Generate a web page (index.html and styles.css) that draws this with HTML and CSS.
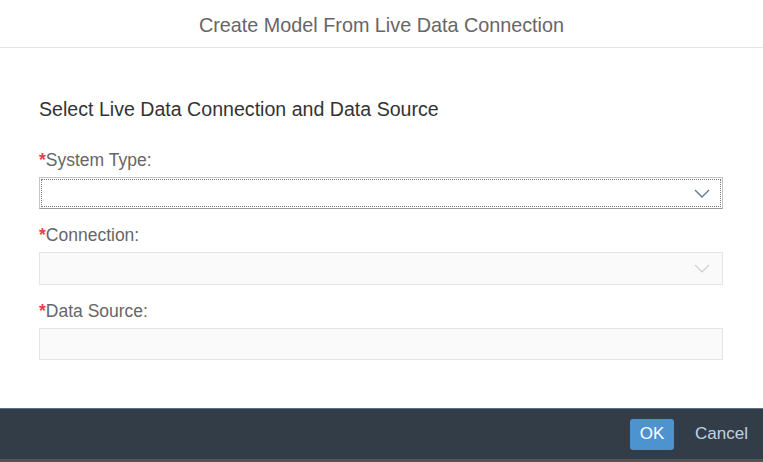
FILE: index.html
```html
<!DOCTYPE html>
<html>
<head>
<meta charset="utf-8">
<link rel="stylesheet" href="styles.css">
</head>
<body>
<div class="dialog">
  <header class="dlg-header">
    <h1 class="dlg-title">Create Model From Live Data Connection</h1>
  </header>
  <main class="dlg-content">
    <h2 class="section-title">Select Live Data Connection and Data Source</h2>
    <div class="field">
      <label class="field-label"><span class="req">*</span>System Type:</label>
      <div class="select focused">
        <svg class="chev" width="16" height="9" viewBox="0 0 16 9"><path d="M1 1 L8 8 L15 1" fill="none" stroke="currentColor" stroke-width="1.4"/></svg>
      </div>
    </div>
    <div class="field">
      <label class="field-label"><span class="req">*</span>Connection:</label>
      <div class="select disabled">
        <svg class="chev" width="16" height="9" viewBox="0 0 16 9"><path d="M1 1 L8 8 L15 1" fill="none" stroke="currentColor" stroke-width="1.2"/></svg>
      </div>
    </div>
    <div class="field">
      <label class="field-label"><span class="req">*</span>Data Source:</label>
      <div class="input disabled"></div>
    </div>
  </main>
  <footer class="dlg-footer">
    <button class="btn btn-ok">OK</button>
    <button class="btn btn-cancel">Cancel</button>
  </footer>
  <div class="bottom-strip"></div>
</div>
</body>
</html>
```
FILE: styles.css
```css
* { box-sizing: border-box; }
html, body { margin: 0; padding: 0; background: #fff; }
body { font-family: "Liberation Sans", Arial, sans-serif; }
.dialog {
  width: 763px;
  height: 462px;
  display: flex;
  flex-direction: column;
  background: #fff;
}
.dlg-header {
  height: 48px;
  border-bottom: 1px solid #e5e5e5;
  display: flex;
  align-items: center;
  justify-content: center;
}
.dlg-title {
  margin: 0;
  font-weight: normal;
  font-size: 19.8px;
  color: #666;
  padding-top: 4px;
}
.dlg-content {
  flex: 1;
  padding: 50px 40px 0 39px;
}
.section-title {
  margin: 0 0 30px 0;
  font-weight: normal;
  font-size: 19.6px;
  line-height: 22px;
  color: #333;
}
.field-label {
  display: block;
  font-size: 17.5px;
  line-height: 20px;
  color: #666;
  margin-bottom: 7px;
}
.req { color: #e34352; font-weight: bold; }
.select, .input {
  height: 32px;
  border: 1px solid #bfbfbf;
  display: flex;
  align-items: center;
  justify-content: flex-end;
  padding-right: 12px;
  margin-bottom: 16px;
}
.select.focused {
  outline: 1px dotted #777;
  outline-offset: -3px;
  border-color: #c4c4c4;
  border-bottom-color: #999;
}
.select.focused .chev { color: #5d7c99; }
.select.disabled, .input.disabled {
  background: #fafafa;
  border-color: #e5e5e5;
}
.select.disabled { height: 33px; }
.select.disabled .chev { color: #d0d0d0; }
.dlg-footer {
  height: 51px;
  background: #333d48;
  border-top: 1px solid #5f7184;
  display: flex;
  align-items: center;
  justify-content: flex-end;
  gap: 21px;
  padding-right: 15px;
}
.btn {
  font-family: "Liberation Sans", Arial, sans-serif;
  font-size: 17px;
  border: none;
  background: transparent;
  height: 31px;
  padding: 0;
  border-radius: 3px;
}
.btn-ok {
  background: #4c93d0;
  color: #fff;
  width: 44px;
}
.btn-cancel {
  color: #bfd3e8;
}
.bottom-strip {
  height: 3px;
  background: #545454;
}
```
